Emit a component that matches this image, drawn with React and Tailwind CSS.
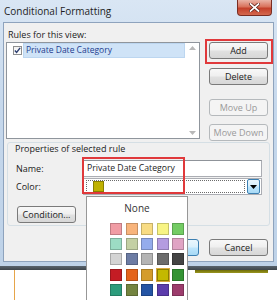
import React from "react";

const swatches = [
  ["#f09ca4", "#f8b47c", "#f8dc84", "#f8f484", "#74cc64"],
  ["#9cdcc4", "#c4d0a4", "#94acec", "#b49ce0", "#e0a4c4"],
  ["#d4d4d4", "#6c7ca4", "#b4b4b4", "#6c6c6c", "#444444"],
  ["#c41c24", "#e4641c", "#d49c2c", "#c4b800", "#349434"],
  ["#2c9c7c", "#748440", "#2454a4", "#5c3cac", "#9c3c6c"],
];

function Btn({ children, disabled, className = "" }) {
  const look = disabled
    ? "border-[#b5b9bc] text-[#9a9a9a] bg-[#f4f4f4]"
    : "border-[#7a7a7a] text-[#1b1b1b] bg-[linear-gradient(#f8f8f8,#efefef_48%,#e1e1e1_52%,#d7d7d7)]";
  return (
    <div
      className={`h-[17px] flex items-center justify-center rounded-[3px] border leading-none ${look} ${className}`}
    >
      {children}
    </div>
  );
}

export default function App() {
  return (
    <div className="w-[277px] h-[300px] overflow-hidden bg-white relative font-['Open_Sans',sans-serif] text-[9px] text-[#1b1b1b]">
      {/* dialog window */}
      <div className="h-[266px] bg-[linear-gradient(#d9e6f4,#c6d8ec_40%,#bed2e8)] flex flex-col">
        {/* title bar */}
        <div className="h-[22px] flex items-start justify-between">
          <span className="pl-[4px] pt-[4px] text-[10px] leading-[14px] text-[#1e1e1e]">
            Conditional Formatting
          </span>
          <div className="mr-[5px] w-[35px] h-[16px] rounded-b-[4px] border border-t-0 border-[#7a2d22] bg-[linear-gradient(#eab3a6,#d9725c_45%,#c4402a_55%,#d4694f)] flex items-center justify-center">
            <svg width="11" height="9" viewBox="0 0 11 9">
              <path d="M1.5 1 L9.5 8 M9.5 1 L1.5 8" stroke="#5a2018" strokeWidth="3.2" strokeLinecap="square" />
              <path d="M1.5 1 L9.5 8 M9.5 1 L1.5 8" stroke="#ffffff" strokeWidth="1.7" strokeLinecap="square" />
            </svg>
          </div>
        </div>

        {/* client area */}
        <div className="mx-[3px] h-[240px] border border-[#8ea3bd] bg-[#f0f0f0] flex flex-col">
          <div className="pt-[5px] pl-[4px] leading-[14px] h-[19px]">Rules for this view:</div>

          {/* list + buttons */}
          <div className="flex ml-[2px]">
            <div className="w-[194px] h-[97px] border border-[#8f959c] bg-white flex">
              <div className="flex-1 flex flex-col">
                <div className="h-[15px] mt-[0px] flex items-center">
                  <div className="ml-[6px] w-[9px] h-[9px] border border-[#8e8f8f] bg-[linear-gradient(#f2f2f2,#ffffff)] flex items-center justify-center">
                    <svg width="7" height="7" viewBox="0 0 8 8">
                      <path d="M1 4 L3 6.3 L7 1" fill="none" stroke="#2c3e70" strokeWidth="1.6" />
                    </svg>
                  </div>
                  <div className="ml-[1px] flex-1 h-[15px] bg-[#cfe3f7] border border-[#bcd6f0] flex items-center pl-[2px] text-[#1e3c8e] leading-none text-[8.5px]">
                    Private Date Category
                  </div>
                </div>
              </div>
              <div className="w-[14px] flex flex-col items-center justify-between py-[3px]">
                <svg width="7" height="4" viewBox="0 0 7 4">
                  <path d="M0 4 L3.5 0 L7 4 Z" fill="#b8b8b8" />
                </svg>
                <svg width="7" height="4" viewBox="0 0 7 4">
                  <path d="M0 0 L3.5 4 L7 0 Z" fill="#b8b8b8" />
                </svg>
              </div>
            </div>
            <div className="ml-[9px] w-[59px] flex flex-col">
              <Btn>Add</Btn>
              <Btn className="mt-[9px]">Delete</Btn>
              <Btn disabled className="mt-[14px]">Move Up</Btn>
              <Btn disabled className="mt-[8px]">Move Down</Btn>
            </div>
          </div>

          {/* properties group */}
          <div className="mt-[1px] ml-[3px] w-[263px] h-[84px] border border-[#d5dfe5] rounded-[3px] flex flex-col">
            <div className="pl-[7px] leading-[12px] h-[12px]">Properties of selected rule</div>
            <div className="mt-[5px] h-[17px] flex items-center">
              <div className="pl-[8px] w-[75px]">Name:</div>
              <div className="w-[179px] h-[17px] bg-white border border-[#abadb3] border-t-[#8f9399] flex items-center pl-[3px] leading-none text-[8.7px]">
                Private Date Category
              </div>
            </div>
            <div className="mt-[1px] h-[17px] flex items-center">
              <div className="pl-[8px] w-[75px]">Color:</div>
              <div className="w-[179px] h-[17px] bg-white border border-[#abadb3] flex items-center">
                <div className="ml-[2px] flex-1 h-[13px] border border-dotted border-[#6a6a6a] flex items-center">
                  <div className="ml-[6px] w-[11px] h-[11px] bg-[#bfb100] border border-[#8a7f00]" />
                </div>
                <div className="ml-[2px] mr-[1px] w-[13px] h-[15px] rounded-[2px] border border-[#3c7fb1] bg-[linear-gradient(#eaf6fd,#d9f0fc_45%,#bee6fd_55%,#a7d9f5)] flex items-center justify-center">
                  <svg width="7" height="4" viewBox="0 0 7 4">
                    <path d="M0 0 L3.5 4 L7 0 Z" fill="#000000" />
                  </svg>
                </div>
              </div>
            </div>
            <div className="mt-[11px] pl-[9px]">
              <Btn className="w-[59px]">Condition...</Btn>
            </div>
          </div>

          {/* OK / Cancel */}
          <div className="mt-[13px] flex justify-end pr-[5px] gap-[10px]">
            <div className="w-[59px] h-[17px] rounded-[3px] border border-[#3c7fb1] bg-[linear-gradient(#eaf6fd,#d9f0fc_48%,#bee6fd_52%,#a7d9f5)] flex items-center justify-center leading-none">
              OK
            </div>
            <Btn className="w-[59px]">Cancel</Btn>
          </div>
        </div>
      </div>

      {/* window bottom shadow */}
      <div className="h-[4px] bg-[linear-gradient(#59636d,#3e454c)]" />

      {/* content behind the dialog */}
      <div className="h-[30px] flex">
        <div className="ml-[14px] w-[1px] h-full bg-[#e6a54a]" />
        <div className="ml-[180px] w-[73px] h-[3px] bg-[linear-gradient(#6e6c08,#9a9620)]" />
      </div>

      {/* colour picker popup */}
      <div className="absolute left-[86px] top-[196px] w-[102px] h-[120px] bg-white border border-[#979797] flex flex-col">
        <div className="pt-[4px] leading-[14px] text-center text-[10px] text-[#333333]">None</div>
        <div className="mt-[8px] pl-[23px] grid grid-cols-[repeat(5,12px)] gap-x-[3.5px] gap-y-[3.2px]">
          {swatches.flat().map((c, i) => (
            <div
              key={i}
              className={
                i === 18
                  ? "w-[12px] h-[12px] outline outline-[1.5px] outline-[#d8a840] border border-[#8a7f00]"
                  : "w-[12px] h-[12px] border border-[#00000033]"
              }
              style={{ backgroundColor: c }}
            />
          ))}
        </div>
      </div>

      {/* red annotation boxes */}
      <div className="absolute left-[205px] top-[39px] w-[68px] h-[25px] border-2 border-[#e0393b]" />
      <div className="absolute left-[82px] top-[157px] w-[103px] h-[37px] border-2 border-[#e0393b]" />
    </div>
  );
}
